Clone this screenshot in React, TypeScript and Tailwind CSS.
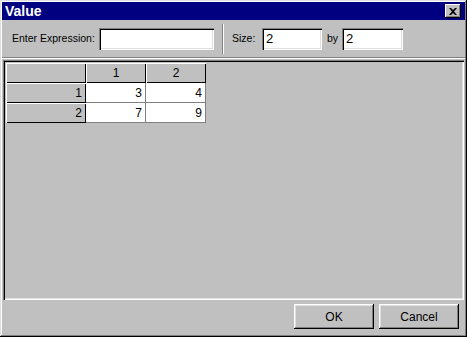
const sans = { fontFamily: '"Liberation Sans", Arial, sans-serif' };

function Field({ value, width }: { value?: string; width: string }) {
  return (
    <div
      className={`${width} h-[22px] bg-white flex items-center pl-[4px] text-[13px] text-black shadow-[inset_1px_1px_#808080,inset_2px_2px_#000,inset_-1px_-1px_#fff,inset_-2px_-2px_#dfdfdf]`}
    >
      {value}
    </div>
  );
}

function Button({ label }: { label: string }) {
  return (
    <button className="w-[80px] h-[25px] bg-[#c0c0c0] text-[12px] text-black shadow-[inset_-1px_-1px_#000,inset_1px_1px_#fff,inset_-2px_-2px_#808080,inset_2px_2px_#dfdfdf]">
      {label}
    </button>
  );
}

const headerCell =
  'h-[20px] bg-[#c0c0c0] text-[12px] text-black flex items-center shadow-[inset_1px_1px_#fff,inset_-1px_-1px_#000]';
const dataCell =
  'h-[20px] bg-white text-[12px] text-black flex items-center justify-end pr-[3px] border-r border-b border-[#808080]';

export default function App() {
  const rows = [
    ['3', '4'],
    ['7', '9'],
  ];

  return (
    <div
      style={sans}
      className="w-[467px] h-[337px] bg-[#c0c0c0] p-[2px] flex flex-col shadow-[inset_-1px_-1px_#000,inset_1px_1px_#dfdfdf,inset_-2px_-2px_#808080,inset_2px_2px_#fff]"
    >
      <div className="h-[18px] bg-[#000080] flex items-center justify-between pl-[3px] pr-[4px]">
        <span className="text-white font-bold text-[14px] leading-none">Value</span>
        <div className="w-[16px] h-[14px] bg-[#c0c0c0] flex items-center justify-center shadow-[inset_-1px_-1px_#000,inset_1px_1px_#fff,inset_-2px_-2px_#808080]">
          <svg width="8" height="7" viewBox="0 0 8 7">
            <path d="M0 0h2l2 2 2-2h2L5 3.5 8 7H6L4 5 2 7H0l3-3.5z" fill="#000" />
          </svg>
        </div>
      </div>

      <div className="h-[38px] flex items-center text-[10.5px] text-black border-b border-[#808080]">
        <span className="ml-[10px] w-[87px] whitespace-nowrap">Enter Expression:</span>
        <Field width="w-[115px]" />
        <div className="ml-[8px] w-[2px] h-[30px] border-l border-[#808080] bg-white" />
        <span className="ml-[8px] w-[30px]">Size:</span>
        <Field value="2" width="w-[60px]" />
        <span className="ml-[5px] w-[15px]">by</span>
        <Field value="2" width="w-[61px]" />
      </div>

      <div className="h-px bg-white" />

      <div className="mx-[1px] mt-[1px] h-[240px] bg-[#c0c0c0] p-[2px] pl-[3px] pt-[3px] shadow-[inset_1px_1px_#808080,inset_2px_2px_#000,inset_-1px_-1px_#fff,inset_-2px_-2px_#dfdfdf]">
        <div className="grid grid-cols-[80px_60px_60px] w-[200px]">
          <div className={headerCell} />
          <div className={`${headerCell} justify-center`}>1</div>
          <div className={`${headerCell} justify-center`}>2</div>
          {rows.map((row, i) => (
            <div key={i} className="contents">
              <div className={`${headerCell} justify-end pr-[4px]`}>{i + 1}</div>
              {row.map((v, j) => (
                <div key={j} className={dataCell}>
                  {v}
                </div>
              ))}
            </div>
          ))}
        </div>
      </div>

      <div className="flex-1 flex items-start justify-end gap-[5px] pt-[4px] pr-[6px]">
        <Button label="OK" />
        <Button label="Cancel" />
      </div>
    </div>
  );
}
